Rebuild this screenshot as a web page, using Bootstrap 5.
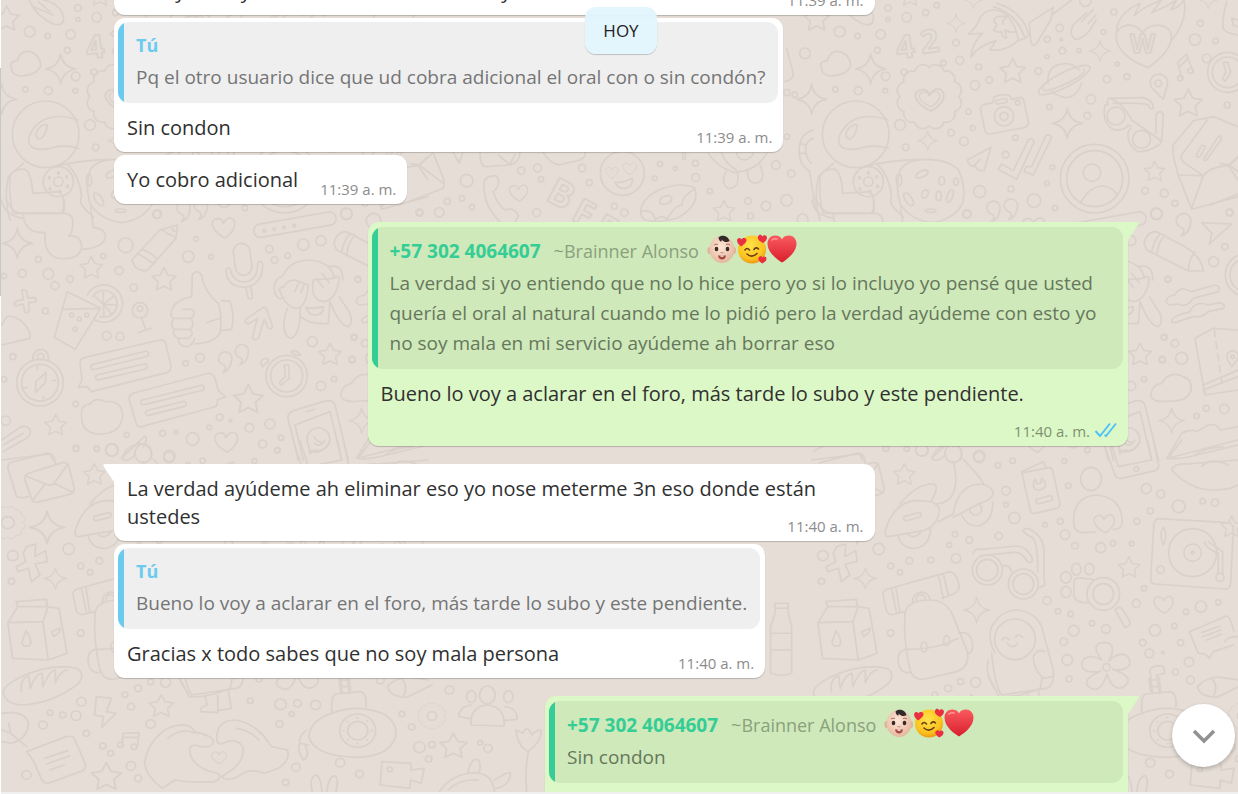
<!DOCTYPE html>
<html lang="es">
<head>
<meta charset="utf-8">
<meta name="viewport" content="width=device-width, initial-scale=1">
<title>Chat</title>
<link href="https://cdn.jsdelivr.net/npm/bootstrap@5.3.0/dist/css/bootstrap.min.css" rel="stylesheet">
<style>
body{font-family:"Open Sans","Noto Sans",sans-serif;color:#303030;background:#e5ddd6}
.scroll-rail{width:1px;background:#fff}
.scroll-thumb{height:228px;margin-top:68px;background:#c8c8c8}
.wallpaper g,.wallpaper path{fill:none;stroke:#dad1ca;stroke-linecap:round;stroke-linejoin:round}
.wallpaper g{stroke-width:5}
.wallpaper text{font-family:"Open Sans",sans-serif;font-weight:700}
.thread{padding-left:113px;padding-right:110px;margin-top:-34px}
.bubble{position:relative;max-width:75%;border-radius:11px;box-shadow:0 1px 1px rgba(0,0,0,.2);margin-bottom:3px;background:#fff}
.bubble-out{background:#dcf8c6}
.turn{margin-bottom:18px}
.bubble-full{width:75%}
.tail-in{border-top-left-radius:0}
.tail-out{border-top-right-radius:0}
.tail{position:absolute;top:0;width:12px;height:18px}
.tail-in .tail{left:-11px;color:#fff}
.tail-out .tail{right:-11px;color:#dcf8c6}
.msg{padding:11px 11px 10px 13px;font-size:20px;line-height:28px}
.stamp{float:right;margin:13px 0 -5px 22px;font-size:15px;line-height:20px;color:#8c8c8c}
.bubble-out .stamp{color:#7f9173}
.quote-wrap{padding:4px 5px 0 4px}
.bubble-out .quote-wrap{padding-top:5px}
.quote{margin:0;border-radius:11px;overflow:hidden;background:#efefef;color:#757575}
.bubble-out .quote{background:#cfe9ba;color:#66775c}
.quote-bar{width:6px;flex:none;background:#6bcbef}
.bubble-out .quote-bar{background:#35cd96}
.quote-text{padding:7px 13px 11px 12px;font-size:19px;line-height:30px}
.quote-name{font-size:18px;line-height:33px;font-weight:700;color:#6bcbef}
.bubble-out .quote-name{font-size:19px;color:#35cd96}
.alias{font-size:18px;font-weight:400;color:#8ba17e;margin-left:13px}
.emoji{width:30px;height:30px;margin-bottom:4px}
.ticks{width:23px;height:16px;margin-left:4px;vertical-align:-1px}
.last-out{width:583px}
.day-chip{background:rgba(225,245,254,.95);border-radius:11px;padding:0 18px;font-size:17px;line-height:47px;box-shadow:0 1px 1px rgba(0,0,0,.2);color:#222}
.day-row{left:113px;right:110px;top:7px}
.btn-down{width:63px;height:63px;right:3px;bottom:25px;background:#fff;box-shadow:0 2px 4px rgba(0,0,0,.22)}
.composer-edge{height:2px;background:#f0f0f0}
</style>
</head>
<body>
<svg width="0" height="0" class="position-absolute" aria-hidden="true">
<defs>
<path id="star" d="M0-40L12-16 38-12 19 6 24 32 0 20-24 32-19 6-38-12-12-16Z"/>
<path id="spark" d="M0-45Q6-6 45 0Q6 6 0 45Q-6 6-45 0Q-6-6 0-45Z"/>
<path id="hrt" d="M4 32C-42 6-40-22-20-26C-8-28-2-20 0-12C6-24 18-34 30-24C42-8 30 16 4 32Z"/>
<path id="quo" d="M-6 30C4 20 4 12-4 8A20 20 0 1 1 20-6C18 12 8 26-6 30Z"/>
<path id="frill" d="M88 0A26 26 0 0 1 76 44A26 26 0 0 1 44 76A26 26 0 0 1 0 88A26 26 0 0 1-44 76A26 26 0 0 1-76 44A26 26 0 0 1-88 0A26 26 0 0 1-76-44A26 26 0 0 1-44-76A26 26 0 0 1 0-88A26 26 0 0 1 44-76A26 26 0 0 1 76-44A26 26 0 0 1 88 0Z"/>
<radialGradient id="skin" cx=".45" cy=".4" r=".65"><stop offset="0" stop-color="#ffe6d6"/><stop offset="1" stop-color="#e3b49b"/></radialGradient>
<radialGradient id="sun" cx=".45" cy=".35" r=".7"><stop offset="0" stop-color="#ffe34a"/><stop offset=".7" stop-color="#fcc21f"/><stop offset="1" stop-color="#e88b12"/></radialGradient>
<linearGradient id="red" x1="0" y1="0" x2="0" y2="1"><stop offset="0" stop-color="#fb5a5f"/><stop offset="1" stop-color="#d81f2e"/></linearGradient>
<symbol id="love" viewBox="0 0 30 30"><path fill="url(#red)" d="M15 28.500C11 26 .5 19 .5 9.500C.5 5 4 1.500 8 1.500C11.500 1.500 14 3 15 5.500C16 3 18.500 1.500 22 1.500C26 1.500 29.500 5 29.500 9.500C29.500 19 19 26 15 28.500Z"/><path d="M5 6Q7 4 10 5" stroke="#ff9a9a" stroke-width="1.500" fill="none" stroke-linecap="round"/></symbol>
<symbol id="baby" viewBox="0 0 30 30"><ellipse cx="2.500" cy="16.500" rx="2" ry="3.500" fill="#e0b09a"/><ellipse cx="27" cy="16.500" rx="2" ry="3.500" fill="#e0b09a"/><ellipse cx="15" cy="15.500" rx="12.500" ry="13.500" fill="url(#skin)"/><path d="M11.500 3.500C14 .5 21 1 22.500 7C20 9 16.500 8 14.500 5.500C15.500 9 12 8 11.500 3.500Z" fill="#33282a"/><path d="M7 11Q9 9.500 11 10.500M19 10.500Q21 9.500 23 11" stroke="#9b7462" fill="none"/><ellipse cx="9.500" cy="15" rx="1.800" ry="2.200" fill="#3b2b28"/><ellipse cx="20.500" cy="15" rx="1.800" ry="2.200" fill="#3b2b28"/><path d="M13.500 18.500Q15 19.500 16.500 18.500" stroke="#c98c73" fill="none"/><path d="M11 21.500H19Q18.500 25.500 15 25.500Q11.500 25.500 11 21.500Z" fill="#a5493f"/><path d="M13.500 21.500H16.500V22.700H13.500Z" fill="#fff"/></symbol>
<symbol id="adore" viewBox="0 0 30 30"><circle cx="15" cy="15.500" r="14" fill="url(#sun)"/><path d="M8 16Q10 13 12.500 16M17 15.500Q19 12.500 21.500 15M10 20Q15 24.500 20 19.500" fill="none" stroke="#6b3d10" stroke-width="1.600" stroke-linecap="round"/><path fill="#e92f40" d="M4 12.500C2 10.500-1 8 .5 5C2 3 4 4 4.500 5.500C5.500 3.500 9 3.500 9.500 6C9.500 9 6 11 4 12.500ZM26 9C24 8 20 6 21 2.500C22 0 24.500.5 25.500 2.500C26.500 .5 29.500 1 30 3.500C30 6 28 8 26 9ZM25.500 29.500C23.500 28.500 20.500 26 21.500 23.500C23 21.500 25 22 25.500 23.500C26.500 21.500 29.500 22.500 29.500 24.500C29.500 27.500 26.500 28.500 25.500 29.500Z"/></symbol>
</defs>
</svg>

<div class="vh-100 d-flex overflow-hidden">
<div class="scroll-rail flex-shrink-0"><div class="scroll-thumb"></div></div>
<div class="flex-grow-1 d-flex flex-column">
<main class="flex-grow-1 position-relative overflow-hidden">

<svg class="wallpaper position-absolute top-0 start-0 w-100 h-100" aria-hidden="true">
<g id="tile">
<g transform="translate(-1,0) scale(.3333)" data-dots="89,95,16 143,108,8 76,268,8 145,272,12">
<path d="M90 5Q80-10 95-25M90 5Q110 50 160 72Q195 80 190 50Q180 10 130 0M100 20L160 45M115 5L150 35M35 205Q25 185 52 182Q60 150 90 155Q120 165 122 195Q115 225 60 228Q35 225 35 205Z"/>
<use href="#star" x="20" y="58"/><use href="#spark" x="182" y="207"/><use href="#spark" x="5" y="298"/>
<circle cx="137" cy="403" r="100"/><path d="M235 360Q160 335 115 370Q75 410 90 435Q105 455 150 445Q190 432 235 445M108 400Q120 370 142 375Q138 410 118 418Q108 415 108 400M70 490L25 530Q10 600 30 660M30 530Q40 505 75 508Q95 520 98 580L180 575Q200 600 190 640L40 640Q25 590 30 530M200 490Q240 530 245 590Q230 610 280 650M165 500Q235 480 330 478"/>
<circle cx="175" cy="545" r="45"/><circle cx="175" cy="545" r="14"/><path d="M175 518v2M200 530v2M203 558v2M180 574v2M150 565v2M148 532v2" stroke-width="10"/>
</g>
<g transform="translate(49,0) scale(.3333)" data-dots="84,24,10 84,58,6 140,52,14 197,38,9 230,16,8 62,103,14 52,151,9 288,128,10 250,189,8 299,181,12 132,216,9 77,229,13 76,272,7 356,201,9 388,240,10 345,256,14 325,335,8 338,384,7 120,375,16 273,398,10 312,424,13 137,442,10 466,413,8 437,464,10 577,502,7 561,550,7 453,567,9 359,575,18 522,602,20 585,624,8 320,643,12 762,36,9 599,84,11 562,118,9 604,119,4 561,170,6 607,152,10 657,152,6 731,96,7 772,192,6 535,213,10 801,230,9 741,238,11 693,298,14 568,321,8 682,347,10 676,2,17 1021,70,9 1005,119,17 1067,123,8 1102,315,9 855,572,10 913,580,12 945,610,9 889,641,17 1108,638,10">
<text x="108" y="172" font-size="96" transform="rotate(-8 150 140)">4</text><text x="182" y="158" font-size="96" transform="rotate(-8 210 130)">2</text>
<use href="#spark" transform="translate(288,70) scale(.6)"/><use href="#spark" transform="translate(720,153) scale(.7)"/><use href="#spark" x="622" y="370"/><use href="#spark" transform="translate(203,422) scale(.65)"/><use href="#spark" transform="translate(1045,0) scale(.6)"/><use href="#spark" transform="translate(340,0) scale(.6)"/>
<use href="#star" x="458" y="215"/><use href="#star" transform="translate(985,312) scale(1.1)"/><use href="#star" transform="translate(884,516) scale(.8)"/><use href="#star" transform="translate(150,-10) scale(.8)"/>
<path d="M333 172Q335 130 368 100L326 102Q352 80 362 50Q385 20 425 35Q465 60 475 120Q440 155 390 150L408 122Q350 140 333 172ZM400 20Q470 40 495 115L475 122M410 10Q485 30 507 105L495 115M508 68L580 22L572 60L530 130Q515 145 512 120ZM440 50Q400 45 402 65Q418 72 400 90Q415 100 425 95Q425 112 440 115L435 90Q455 100 465 95M440 50Q425 65 430 72M575 45L635 0M640 75Q625 100 645 118Q665 120 690 90L708 60M640 75L680 38M665 65L700 28M685 70L708 45"/>
<path d="M865 203C800 180 765 140 769 105C772 75 820 60 848 98C870 65 930 70 934 105C938 145 900 175 865 203ZM769 100Q770 40 840 10L822 48Q850 20 905 0L875 38Q920 20 950 0L932 30Q960 20 972 0Q985 60 934 122"/>
<text x="810" y="158" font-size="78">W</text>
<path d="M953 188L980 162L998 212M960 200L984 175M953 188L965 232"/><circle cx="961" cy="235" r="8"/><circle cx="992" cy="212" r="8"/>
<circle cx="1103" cy="217" r="60"/><circle cx="1103" cy="217" r="46"/><circle cx="1040" cy="175" r="13"/><path d="M1090 188L1103 186L1112 216L1096 244L1088 236L1098 215Z"/>
<path d="M1100 5Q1085 60 1090 85Q1095 100 1134 105M1134 60L1115 55L1120 75L1134 80"/>
<path d="M564 250Q560 195 612 191Q640 190 658 210M575 275Q640 320 665 250"/><ellipse cx="613" cy="240" rx="86" ry="22" transform="rotate(-27 613 240)"/><path d="M550 262Q540 285 610 255Q685 220 672 208"/>
<use href="#frill" x="208" y="290"/><use href="#hrt" transform="translate(208,298) scale(1.250 1.1)"/><use href="#hrt" transform="translate(208,296) scale(.9 .75)"/>
<path d="M362 330Q358 318 375 313L398 308L402 292Q425 278 450 288L455 298L480 292Q490 292 492 305L506 368Q505 380 492 383L390 402Q376 402 374 388Z"/><circle cx="432" cy="349" r="29"/><circle cx="432" cy="349" r="12"/><circle cx="473" cy="308" r="7"/><rect x="407" y="298" width="35" height="12" rx="5" transform="rotate(-12 425 304)"/>
<path d="M735 315Q725 370 760 388Q790 395 805 375Q820 375 803 400Q805 440 835 455Q870 455 895 435Q905 435 900 420L815 360Q790 310 750 295Q735 305 745 315ZM745 295L850 293Q880 300 880 325Q870 330 865 315Q850 308 760 310M888 345Q900 325 910 345L905 425M888 345V400"/><circle cx="768" cy="348" r="27"/><circle cx="845" cy="418" r="27"/>
<path d="M910 298L880 268A26 26 0 1 1 922 255Z"/><circle cx="895" cy="250" r="10"/>
<path d="M322 480L393 442L372 512Q350 515 345 495L360 478L340 500Q325 495 322 480M415 508L425 492L460 512L505 420Q515 412 523 425L470 538ZM498 500L515 500L557 408Q568 400 575 412L520 525L492 515Z"/>
<circle cx="704" cy="536" r="103"/><circle cx="704" cy="536" r="84"/><circle cx="696" cy="518" r="26"/><path d="M662 608Q690 558 728 558Q755 560 770 582"/>
<path d="M1134 380L1062 350L1000 362L940 435Q935 460 955 525L995 628L1134 590M1042 360L965 465Q960 480 975 490L1030 527L955 525M1030 527L995 625M1030 527Q1050 500 1105 497L1134 470M1105 497L1134 540M1075 410Q1085 405 1084 418L1040 480Q1030 485 1032 475ZM1025 437Q1038 435 1034 445L1020 470Q1008 475 1010 463Z"/>
<path d="M120 510Q140 478 200 478Q270 480 295 510Q320 560 308 610Q280 660 215 668Q150 660 120 610Q105 560 120 510Z"/><ellipse cx="186" cy="522" rx="20" ry="9" transform="rotate(-25 186 522)"/><ellipse cx="245" cy="542" rx="9" ry="13"/><ellipse cx="195" cy="582" rx="9" ry="13" transform="rotate(30 195 582)"/><ellipse cx="236" cy="588" rx="8" ry="14"/><ellipse cx="146" cy="598" rx="10" ry="22" transform="rotate(-35 146 598)"/><ellipse cx="270" cy="588" rx="8" ry="20" transform="rotate(20 270 588)"/><ellipse cx="212" cy="632" rx="16" ry="5"/><ellipse cx="288" cy="545" rx="7" ry="11"/><ellipse cx="117" cy="540" rx="8" ry="18"/>
<use href="#quo" x="400" y="635"/><use href="#quo" x="452" y="628"/>
</g>
<g transform="translate(-1,200) scale(.3333)" data-dots="145,222,16 165,257,12 67,220,12 115,178,9 210,237,10 310,168,8 357,212,12 377,136,22 472,42,12 588,116,7 565,170,17 633,170,7 401,263,11 136,333,9 320,407,13 360,410,12 39,470,9 557,490,8 600,473,13 227,612,8 17,662,14 380,705,7 228,745,9 290,746,7 336,750,19 488,700,9 528,697,5 578,717,19 508,768,17 659,652,10 692,662,4 628,682,7 748,683,13 810,672,15 843,713,8 788,732,12 832,750,8 808,147,11 824,180,10 863,167,8 910,134,17 963,122,15 1040,42,17 1074,238,8 1063,412,9 937,425,15 1057,480,9 1002,537,8 963,558,14 12,228,8 12,538,8 215,345,6 238,357,6 260,345,6 225,387,6 793,92,4 823,87,4 852,82,4 883,77,4">
<path d="M70 40Q70 100 135 98Q130 180 195 176Q245 175 245 135Q240 105 205 108Q220 100 218 60Q215 40 190 40M245 148Q310 145 317 110Q315 85 280 82L272 20M20 0Q35 40 70 40H180Q195 35 190 0M5 0Q10 45 70 55"/>
<use href="#hrt" x="670" y="82"/><use href="#spark" x="52" y="130"/>
<path d="M395 180L480 90L533 75L528 115L445 208Q430 220 405 200ZM480 90Q495 90 500 100Q520 105 528 115M412 162Q435 170 460 192M425 148Q450 155 472 178M515 78Q515 95 532 95"/>
<rect x="703" y="130" width="50" height="96" rx="25" transform="rotate(-7 728 178)"/><path d="M678 210Q680 262 735 262Q790 255 788 190Q778 180 773 190Q775 240 735 246Q698 246 690 205Q682 200 678 210ZM737 262L745 295Q755 300 758 292L752 258"/>
<rect x="760" y="54" width="250" height="40" rx="20" transform="rotate(-10 885 74)"/>
<path d="M66 272Q74 265 80 275L84 295L105 292Q115 300 103 306L86 308L88 332Q80 342 74 335L70 312L48 318Q38 310 50 303L70 298Z"/>
<use href="#star" transform="translate(274,205) scale(.9)"/><use href="#star" transform="translate(492,240) scale(.95)"/><use href="#star" transform="translate(990,465) scale(.9)"/><use href="#star" transform="translate(745,600) scale(1.150)"/><use href="#star" transform="translate(167,677) scale(.85)"/>
<path d="M202 275L302 325L225 448L163 412ZM185 328L302 325M262 285A56 56 0 1 1 285 360M278 290A40 40 0 1 1 300 350M310 313L310 278M310 313L340 290M310 313L348 315M310 313L335 342M310 313L312 348M310 313L285 290"/>
<circle cx="420" cy="331" r="23"/><circle cx="420" cy="326" r="8"/><path d="M425 353L436 388M415 398L455 384"/>
<path d="M577 225Q590 205 605 225Q612 275 655 310Q668 350 660 400Q640 430 585 432M577 225L575 290Q530 300 520 320Q505 345 520 355Q510 375 522 388Q515 405 535 415Q535 440 560 440Q580 435 584 415M520 355H575Q590 335 575 328H548M522 388H570Q585 375 575 358M535 415H565Q585 400 570 390M665 302L690 304Q705 345 695 388L662 392M620 368L660 355"/>
<path d="M785 325Q795 318 800 328L818 380Q812 392 803 382L793 358L775 415Q765 425 757 413L772 355L745 372Q733 370 737 358Z"/>
<path d="M850 225Q870 180 930 180Q990 185 1002 230M848 228Q815 240 825 280Q835 300 845 295M985 200Q1030 190 1028 240M850 262Q860 240 885 240L925 255Q920 320 890 325Q860 325 838 270Q840 260 850 262M885 275L895 250M903 278L912 255M940 240Q930 300 970 305Q1010 300 1018 235Q1015 225 1000 235L940 240M948 235L970 262M965 220L988 248M862 325Q840 390 865 412Q890 425 900 360V325M902 350Q930 375 985 370L990 305Q1020 380 1045 380Q1060 370 1050 340L1018 290M918 322Q940 328 970 320Q970 345 945 345Q925 345 918 322Z"/>
<circle cx="120" cy="548" r="70"/><circle cx="120" cy="548" r="55"/><circle cx="122" cy="470" r="10"/><path d="M98 482Q98 450 122 448Q148 450 145 482M138 517L108 545L106 578L136 548ZM112 500V508M72 565L82 562M168 540L158 543M130 588V596"/>
<path d="M240 490Q240 475 255 472L480 420Q495 418 498 432L513 500Q512 515 500 518L275 575L260 560L235 562L246 540Z"/><rect x="270" y="473" width="178" height="16" rx="8" transform="rotate(-14 360 480)"/><rect x="285" y="508" width="158" height="16" rx="8" transform="rotate(-13 364 516)"/>
<path d="M388 600Q385 585 400 580L625 520Q640 520 645 535L655 572L677 590L652 600Q655 620 640 622L425 680Q410 682 408 668Z"/><rect x="420" y="578" width="195" height="15" rx="7" transform="rotate(-14 517 585)"/><rect x="435" y="618" width="125" height="15" rx="7" transform="rotate(-14 497 625)"/>
<use href="#quo" x="675" y="487"/><use href="#quo" x="725" y="465"/>
<circle cx="860" cy="528" r="62"/><circle cx="860" cy="528" r="48"/><path d="M853 495L866 495L868 535L843 556L838 548L856 530ZM782 490Q785 475 800 475L806 482L788 500ZM873 456Q885 445 902 465L888 466ZM245 650Q240 615 270 612Q285 590 315 605Q365 600 368 645Q365 700 300 703Q245 700 245 650Z"/>
<path d="M865 660Q860 640 880 632L980 602Q1000 600 1005 615L1045 780M865 660L895 780M885 675L990 635L1025 780M885 675L910 780M920 635L945 628M930 760L926 735A34 34 0 1 1 945 750ZM942 710Q950 725 965 728"/>
<path d="M5 435L90 415Q95 390 60 360Q35 345 20 350L5 375M5 720L60 682Q85 672 92 695Q90 710 70 720L10 755M10 735L70 700M370 770L435 708Q445 720 430 740M400 740Q420 720 450 745Q460 770 450 780M5 780L150 762L158 780"/>
<use href="#hrt" x="678" y="725"/>
</g>
<g transform="translate(69,210) scale(.3333)" data-dots="1035,110,9 1001,155,15 864,208,9 852,382,8 885,400,11 905,445,18 846,448,9 979,595,9 1033,597,14 950,618,8">
<use href="#quo" transform="translate(910,45) scale(1.1)"/>
<path d="M965 38L1055 42L988 102L996 70ZM792 100Q800 65 830 65L915 110Q965 140 970 183L925 183L800 120ZM855 75Q835 95 830 135M840 72Q822 90 815 125M945 125Q925 150 925 183"/>
<path d="M860 270Q862 258 885 255Q900 225 935 245L1005 225Q1025 230 1015 245L940 265Q920 295 895 282L870 285Q855 280 860 270ZM875 330Q880 318 930 305Q945 270 985 285L1020 278Q1040 285 1030 295L985 305Q965 325 940 320L885 338Q875 340 875 330Z"/>
<circle cx="1100" cy="195" r="64"/><circle cx="1100" cy="195" r="50"/>
<path d="M945 385L1000 355L1074 360M945 385L975 555L1074 540M970 525L1074 480M970 540L1074 500M1055 470Q1035 440 1043 430Q1058 415 1074 430Q1080 445 1055 470Z"/><path d="M1003 360L1025 515" stroke-dasharray="20 16"/><circle cx="1058" cy="440" r="5"/>
<path d="M812 555Q815 525 845 520Q870 480 910 500Q940 510 932 545Q920 575 870 573Q815 580 812 555Z"/><use href="#spark" transform="translate(875,632) scale(.85)"/>
<path d="M860 745L905 670Q930 655 950 665L985 645Q1010 640 1020 660L1074 650M875 742L1074 690"/>
</g>
<g transform="translate(59,440) scale(.3333)" data-dots="155,30,18 110,26,8 48,26,8 327,52,16 384,76,8 428,62,8 408,152,13 408,194,7 433,234,17 255,283,8 298,300,10 238,315,7 386,288,11 525,254,7 26,327,17 62,378,9 90,397,8 118,362,10 182,360,9 258,355,14 62,579,10 272,725,9 317,727,15 531,482,12 564,514,8 602,522,8 611,572,16 666,550,8 708,567,13 581,605,11 592,660,16 597,717,9 571,244,9 585,284,14 615,317,10 692,323,15 729,310,8 785,311,7 801,244,9 583,63,7 595,137,8 652,31,8 829,146,15 872,162,12 841,213,9 926,199,19 998,184,8 1035,188,11 822,445,8 799,490,12 993,500,17 1045,487,8 948,515,8 913,558,8 855,571,17 818,608,10 838,640,13 879,638,4 932,608,9 957,666,14 916,696,9 961,720,12">
<use href="#star" transform="translate(103,105) scale(.85)"/><use href="#star" transform="translate(777,384) scale(.85)"/><use href="#star" transform="translate(1085,262) scale(.85)"/><use href="#spark" transform="translate(320,510) scale(.85)"/><use href="#hrt" transform="translate(702,250) scale(.9)"/><use href="#hrt" transform="translate(880,493) scale(.85)"/>
<path d="M45 275Q70 185 140 182Q210 180 208 215Q200 260 160 272L55 290Q45 290 45 275ZM90 192Q140 130 190 132Q210 135 185 182M85 290Q95 325 135 325Q180 320 182 262M112 282Q130 300 152 278M205 245L250 222Q260 150 310 135Q360 125 370 160Q365 180 330 190L250 232M275 225Q290 260 325 258Q370 245 368 185M299 205A18 18 0 1 0 330 195M280 58Q330 110 340 130M250 65Q265 120 250 160Q235 190 200 192M185 55Q200 20 225 15M185 55Q200 70 225 45"/><ellipse cx="250" cy="40" rx="25" ry="28"/><rect x="100" y="223" width="54" height="14" rx="7" transform="rotate(-15 127 230)"/>
<path d="M455 95L520 65L528 82M455 95L482 215Q485 222 495 220L560 205Q572 200 570 190L548 92Q545 82 535 83L460 98M495 118Q485 135 495 148Q515 155 527 138Q528 125 515 115L512 130L502 132Z"/><rect x="498" y="172" width="50" height="15" rx="6" transform="rotate(-14 522 180)"/>
<ellipse cx="663" cy="117" rx="31" ry="35"/><path d="M675 276L640 278Q612 278 611 245Q610 170 680 165Q755 172 757 245Q757 268 730 268"/>
<path d="M865 236L1075 248Q1090 250 1090 270L1082 430Q1080 448 1065 447L855 432Q840 430 842 415L852 250Q855 237 865 236Z"/><circle cx="968" cy="338" r="72"/><circle cx="968" cy="338" r="26"/><circle cx="968" cy="338" r="4"/><circle cx="872" cy="389" r="11"/><circle cx="1050" cy="412" r="12"/><path d="M1005 305Q1000 320 1045 340L1045 400M1058 400V335L1015 305M880 262Q870 275 875 300L880 315L886 300Q890 275 880 262"/>
<circle cx="352" cy="390" r="45"/><circle cx="352" cy="390" r="32"/><circle cx="460" cy="432" r="45"/><circle cx="460" cy="432" r="31"/><path d="M310 340Q312 325 330 328L440 318Q475 320 488 360Q480 375 470 362Q455 335 430 337L330 348M398 378Q415 370 425 395M460 270Q470 262 480 268Q520 290 522 330V415L525 435L505 445M460 275Q470 285 490 295Q505 320 503 395"/>
<ellipse cx="619" cy="388" rx="14" ry="18"/><ellipse cx="658" cy="387" rx="14" ry="17"/><ellipse cx="588" cy="412" rx="16" ry="17"/><ellipse cx="588" cy="456" rx="15" ry="17"/><path d="M670 418L640 415Q615 410 612 425V470Q620 490 655 488M735 510Q745 495 758 508L780 545Q782 560 765 562Z"/><circle cx="700" cy="462" r="49"/><circle cx="700" cy="462" r="31"/>
<circle cx="710" cy="682" r="11"/><path d="M696 660C660 615 685 608 705 608C730 608 735 630 716 664C745 632 775 640 780 665C780 690 745 692 728 688C775 705 785 720 765 738C740 755 722 735 711 702C700 740 680 760 655 740C638 720 665 705 692 694C650 700 632 690 636 668C645 640 680 650 696 660Z"/>
<path d="M105 520Q110 480 180 480Q230 480 250 530L292 635Q300 680 260 695L160 718Q125 720 118 680Q100 600 105 520ZM110 628Q200 630 265 595M105 628Q75 640 88 680Q100 705 122 695M265 580Q300 570 308 610Q310 640 292 640M40 470Q35 455 50 448L240 395Q262 400 268 440Q265 455 250 462L215 475M40 470L50 515Q60 528 75 522L105 515M65 447L80 520M78 445L90 518M205 405L220 475M220 402L235 468M128 488A26 26 0 1 1 180 478M140 485A14 14 0 1 1 166 478"/><ellipse cx="162" cy="621" rx="9" ry="15"/><ellipse cx="230" cy="602" rx="9" ry="15"/>
<circle cx="435" cy="598" r="61"/><path d="M375 640Q345 580 375 545Q400 510 440 510Q495 515 515 560L550 690Q555 735 530 745L395 765Q375 740 365 640M490 650Q500 625 525 635M490 650Q490 690 520 715L548 710M355 660Q345 700 370 740M395 600Q405 585 418 600M435 592Q445 578 458 592M412 610Q430 630 442 610"/>
<path d="M958 575L1070 528Q1080 530 1088 560L1092 575M958 575L985 640L1005 642L1018 655L1030 635L1090 615M995 578L1050 558M998 590L1053 570M1010 600L1055 583M1065 605Q1070 590 1104 590"/>
<path d="M840 690Q845 675 880 678L885 700L860 705L868 760M840 690L848 760M845 720H860M848 740H864"/>
<path d="M705 20L735 105Q740 118 755 115L855 92Q870 85 865 70L850 0M720 0L745 80L845 60L832 0M750 30Q780 50 810 5M765 10Q780 25 795 0"/><circle cx="799" cy="87" r="7"/>
<path d="M895 55L935 0M895 55Q920 60 980 45L1104 15M905 90Q910 70 950 72L1104 60M905 90Q960 150 1030 150Q1080 150 1104 135M975 45Q1000 25 1060 20M995 80Q1020 50 1075 75"/>
</g>
<g transform="translate(-1,440) scale(.357 .3333)" data-dots="36,347,15 32,424,9 228,785,13 140,818,8 176,825,9 213,827,14 120,855,12 242,880,9 288,918,9 350,764,8 387,745,10 367,800,10 422,852,13 367,978,13 387,1015,10 310,940,8 74,1005,13 701,782,8 786,793,16 833,790,11 884,795,14 817,822,7 783,852,10 1126,822,8 1153,861,9 1259,750,12 1175,922,16 1210,914,9 1201,957,9 1345,908,7 1367,925,12 953,968,13 1007,1002,11 829,982,12 800,1027,9">
<path d="M22 85Q20 70 35 66L130 40Q148 38 152 55L155 70M22 85L45 165Q50 178 80 170M70 120Q68 105 80 100L175 68Q190 65 193 80L208 145Q208 160 195 163L105 187Q90 188 87 172ZM72 108L135 135Q150 138 155 125L190 72M90 182L125 135M205 158L152 130"/>
<use href="#frill" transform="translate(22,248) scale(.5)"/><circle cx="22" cy="248" r="18"/><use href="#spark" transform="translate(132,262) scale(1.1)"/><use href="#spark" transform="translate(155,415) scale(.7)"/>
<path d="M75 320L100 312L98 350L128 332L132 365L98 372L112 405L88 425L80 385L50 395L45 380L72 365L65 340Z"/>
<path d="M22 548L50 500L45 485L130 478L132 500L165 505L188 640L135 660L35 655ZM22 548L120 545L135 660M120 545L135 500L50 500M73 572Q95 610 80 618Q60 620 62 605ZM145 575L168 565Q172 575 150 590Z"/>
<path d="M10 760Q5 740 60 710Q140 670 215 685Q240 700 220 730Q150 790 60 795Q15 790 10 760ZM60 755Q55 715 80 708L85 745Q100 700 118 700L120 740Q140 690 155 690V728Q170 690 190 690M270 770L312 775L298 815L325 820L285 862L290 830L265 825Z"/>
<use href="#star" transform="translate(452,800) scale(.9)"/><use href="#star" x="1270" y="920"/><use href="#star" transform="translate(298,1012) scale(1.1)"/>
<path d="M5 820Q70 810 80 850Q75 900 30 910L5 905M25 850L30 880L75 920M5 870L30 880M75 935L185 890Q205 885 210 900L240 975Q240 990 225 995L135 1030Q120 1030 115 1015L95 965ZM125 955L190 932M130 972L195 948M140 990L180 975"/>
<path d="M345 880L390 878L385 920M345 880L342 912M345 892H388"/><circle cx="337" cy="914" r="8"/><circle cx="375" cy="920" r="8"/>
<path d="M405 970Q415 900 470 865Q530 840 545 875Q600 890 598 905Q590 930 545 915Q520 920 540 960Q560 990 610 1000Q625 1015 600 1025Q540 1030 490 1020L455 1045Q410 1010 405 970ZM470 895Q510 860 545 880M610 870Q620 840 660 840Q720 850 760 920L805 930Q815 960 780 985L740 1000Q700 985 680 1000Q640 1030 620 1010Q690 970 680 920Q660 890 625 910Q600 920 610 870M660 865Q700 870 725 900"/><use href="#hrt" transform="translate(613,952) scale(.6)"/>
<path d="M500 710L530 770Q580 775 645 745L650 715M575 770L580 795Q560 800 562 815L610 818V765M610 812L648 805L640 755"/>
<path d="M865 890Q870 840 930 820Q1000 790 1070 820Q1115 845 1108 890Q1090 950 1000 952Q880 950 865 890ZM930 820Q925 770 940 762L1010 755Q1028 760 1025 800M955 760L950 715M982 757L978 712M860 870Q835 890 840 910L865 915M840 910Q830 930 850 960Q870 950 855 915"/><circle cx="1002" cy="872" r="50"/><circle cx="1002" cy="872" r="28"/><circle cx="1002" cy="872" r="39" stroke-dasharray="2 28"/>
<path d="M1085 740Q1110 710 1150 712L1200 720M1085 740Q1090 770 1140 772L1210 735M1125 715Q1145 740 1130 770"/><use href="#frill" transform="translate(1210,828) scale(.4)"/><circle cx="1210" cy="828" r="13"/>
<path d="M1320 855Q1315 800 1365 795Q1415 800 1412 858ZM1315 835L1285 830Q1285 800 1320 795M1415 800Q1450 805 1448 838L1412 842M1445 870Q1450 920 1480 935Q1520 900 1515 870Q1500 870 1490 885Q1475 850 1465 880ZM1480 935Q1470 990 1475 1055M1070 965L1150 970L1152 990L1188 985L1180 1030L1150 1020L1148 1045L1065 1035ZM875 1060Q865 1010 885 1005Q900 1010 902 1060M915 1060Q920 1005 940 1008Q950 1020 940 1060M1230 1055Q1260 1010 1310 1000Q1380 990 1385 1055M1310 1000Q1320 950 1340 960Q1350 980 1340 1000M1255 1050Q1290 1015 1340 1020M1385 1020Q1430 990 1430 1000Q1425 1040 1390 1045"/><ellipse cx="1365" cy="765" rx="22" ry="27"/><ellipse cx="1320" cy="770" rx="13" ry="18"/><ellipse cx="1424" cy="770" rx="13" ry="18"/><circle cx="1092" cy="988" r="7"/>
</g>
<g transform="translate(399,140) scale(.3333)" data-dots="200,122,19 364,92,11 413,84,12 546,84,11 423,118,8 568,128,9 410,218,12 142,184,9 186,175,8 59,217,10 118,217,14 216,201,8 643,199,9 673,218,11 780,72,8 826,85,6 886,70,9 764,115,7 887,113,12 1128,75,13 1174,101,11 930,153,8 1044,183,10 1098,198,14 1160,181,17 1052,228,9 1208,238,16 1184,-136,8 1161,-10,8 1215,-260,16 1161,-142,9">
<path d="M0 195L130 145Q135 130 128 110L100 40M58 75L130 130M30 70L58 75L98 40M160 38L178 70L188 40M240 38Q240 80 260 80L330 75Q360 65 360 38M295 45L330 74L345 42M430 38Q445 65 475 75L540 60Q560 50 555 38"/>
<use href="#hrt" transform="translate(355,158) scale(.8)"/><path d="M252 130Q255 105 290 108Q302 125 290 145L280 155Q290 190 315 210Q340 200 355 225Q350 245 340 250M252 130Q250 200 300 245"/>
<g transform="rotate(28 500 170)"><text x="445" y="208" font-size="110">B</text><text x="540" y="225" font-size="105">F</text><text x="620" y="235" font-size="105">F</text></g>
<circle cx="667" cy="100" r="66"/><use href="#hrt" transform="translate(635,97) scale(.55)"/><use href="#hrt" transform="translate(688,85) scale(.6)"/>
<path d="M645 127Q670 130 697 115Q700 140 675 145Q655 148 645 127ZM722 215Q725 170 790 145Q850 125 885 145Q900 200 830 235Q780 250 735 240Q722 230 722 215ZM722 215Q760 205 765 240Q790 220 800 240Q820 200 845 195Q850 165 880 150"/><ellipse cx="797" cy="180" rx="19" ry="12" transform="rotate(-20 797 180)"/>
<use href="#star" transform="translate(972,215) scale(.85)"/><path d="M978 95Q960 130 985 146Q1020 145 1013 100M1043 90Q1040 130 1070 130Q1100 120 1080 75M925 40Q950 80 1000 97Q1070 95 1100 40M965 40Q980 75 1010 90M1010 40Q1015 60 1035 60Q1055 55 1060 40M848 38V58H856V38M1240-30Q1198-20 1197 35Q1200 80 1228 92L1248 210M1240-5Q1218 0 1217 30Q1220 60 1235 70M1200 10L1217 15M1197 40H1217M1160-275L1180-200Q1180-180 1155-175"/>
<path d="M1125 1390H1165V1420L1175 1460V1600Q1145 1612 1112 1600V1460L1125 1420ZM1112 1480H1175M1112 1530H1175M1125 1405H1165"/>
</g>
</g>
<use href="#tile" x="810"/>
</svg>

<div class="thread position-relative d-flex flex-column align-items-start">
<div class="bubble bubble-full"><div class="msg clearfix">Hola y unas ya con los datos en el norte ya<time class="stamp">11:39 a. m.</time></div></div>

<div class="bubble">
<div class="quote-wrap"><blockquote class="quote d-flex"><span class="quote-bar"></span><div class="quote-text"><div class="quote-name">Tú</div>Pq el otro usuario dice que ud cobra adicional el oral con o sin condón?</div></blockquote></div>
<div class="msg clearfix">Sin condon<time class="stamp">11:39 a. m.</time></div>
</div>

<div class="bubble turn"><div class="msg clearfix">Yo cobro adicional<time class="stamp">11:39 a. m.</time></div></div>

<div class="bubble bubble-out tail-out turn align-self-end">
<svg class="tail" viewBox="0 0 12 18" aria-hidden="true"><path fill="currentColor" d="M0 0H10Q13 0 11 3L1 18H0Z"/></svg>
<div class="quote-wrap"><blockquote class="quote d-flex"><span class="quote-bar"></span><div class="quote-text"><div class="quote-name d-flex align-items-center">+57 302 4064607<span class="alias me-2">~Brainner Alonso</span><svg class="emoji" role="img" aria-label="bebé"><use href="#baby"/></svg><svg class="emoji" role="img" aria-label="cara enamorada"><use href="#adore"/></svg><svg class="emoji" role="img" aria-label="corazón"><use href="#love"/></svg></div>La verdad si yo entiendo que no lo hice pero yo si lo incluyo yo pensé que usted quería el oral al natural cuando me lo pidió pero la verdad ayúdeme con esto yo no soy mala en mi servicio ayúdeme ah borrar eso</div></blockquote></div>
<div class="msg clearfix">Bueno lo voy a aclarar en el foro, más tarde lo subo y este pendiente.<span class="stamp"><time>11:40 a. m.</time><svg class="ticks" viewBox="0 0 23 16" role="img" aria-label="leído"><path d="M1.500 9L6 14L16 1.500M10.500 13L12 14L22 1.500" fill="none" stroke="#4fc3f7" stroke-width="2"/></svg></span></div>
</div>

<div class="bubble tail-in">
<svg class="tail" viewBox="0 0 12 18" aria-hidden="true"><path fill="currentColor" d="M12 0H2Q-1 0 1 3L11 18H12Z"/></svg>
<div class="msg clearfix">La verdad ayúdeme ah eliminar eso yo nose meterme 3n eso donde están ustedes<time class="stamp">11:40 a. m.</time></div>
</div>

<div class="bubble turn">
<div class="quote-wrap"><blockquote class="quote d-flex"><span class="quote-bar"></span><div class="quote-text"><div class="quote-name">Tú</div>Bueno lo voy a aclarar en el foro, más tarde lo subo y este pendiente.</div></blockquote></div>
<div class="msg clearfix">Gracias x todo sabes que no soy mala persona<time class="stamp">11:40 a. m.</time></div>
</div>

<div class="bubble bubble-out tail-out turn align-self-end last-out">
<svg class="tail" viewBox="0 0 12 18" aria-hidden="true"><path fill="currentColor" d="M0 0H10Q13 0 11 3L1 18H0Z"/></svg>
<div class="quote-wrap"><blockquote class="quote d-flex"><span class="quote-bar"></span><div class="quote-text"><div class="quote-name d-flex align-items-center">+57 302 4064607<span class="alias me-2">~Brainner Alonso</span><svg class="emoji" role="img" aria-label="bebé"><use href="#baby"/></svg><svg class="emoji" role="img" aria-label="cara enamorada"><use href="#adore"/></svg><svg class="emoji" role="img" aria-label="corazón"><use href="#love"/></svg></div>Sin condon</div></blockquote></div>
<div class="msg clearfix">&nbsp;</div>
</div>
</div>

<div class="day-row position-absolute d-flex justify-content-center"><span class="day-chip">HOY</span></div>
<button type="button" class="btn-down position-absolute border-0 rounded-circle p-0 d-flex align-items-center justify-content-center" aria-label="Bajar"><svg width="24" height="16" viewBox="0 0 24 16"><path d="M2 3L12 13L22 3" fill="none" stroke="#919191" stroke-width="3.500"/></svg></button>
</main>
<footer class="composer-edge flex-shrink-0"></footer>
</div>
</div>
<script src="https://cdn.jsdelivr.net/npm/bootstrap@5.3.0/dist/js/bootstrap.bundle.min.js"></script>
<script>
// Scatter the small bubbles of the wallpaper: each entry is x,y,radius.
document.querySelectorAll('[data-dots]').forEach(function (g) {
  g.dataset.dots.split(' ').forEach(function (dot) {
    var v = dot.split(',');
    var c = document.createElementNS('http://www.w3.org/2000/svg', 'circle');
    c.setAttribute('cx', v[0]); c.setAttribute('cy', v[1]); c.setAttribute('r', v[2]);
    g.appendChild(c);
  });
});
</script>
</body>
</html>
